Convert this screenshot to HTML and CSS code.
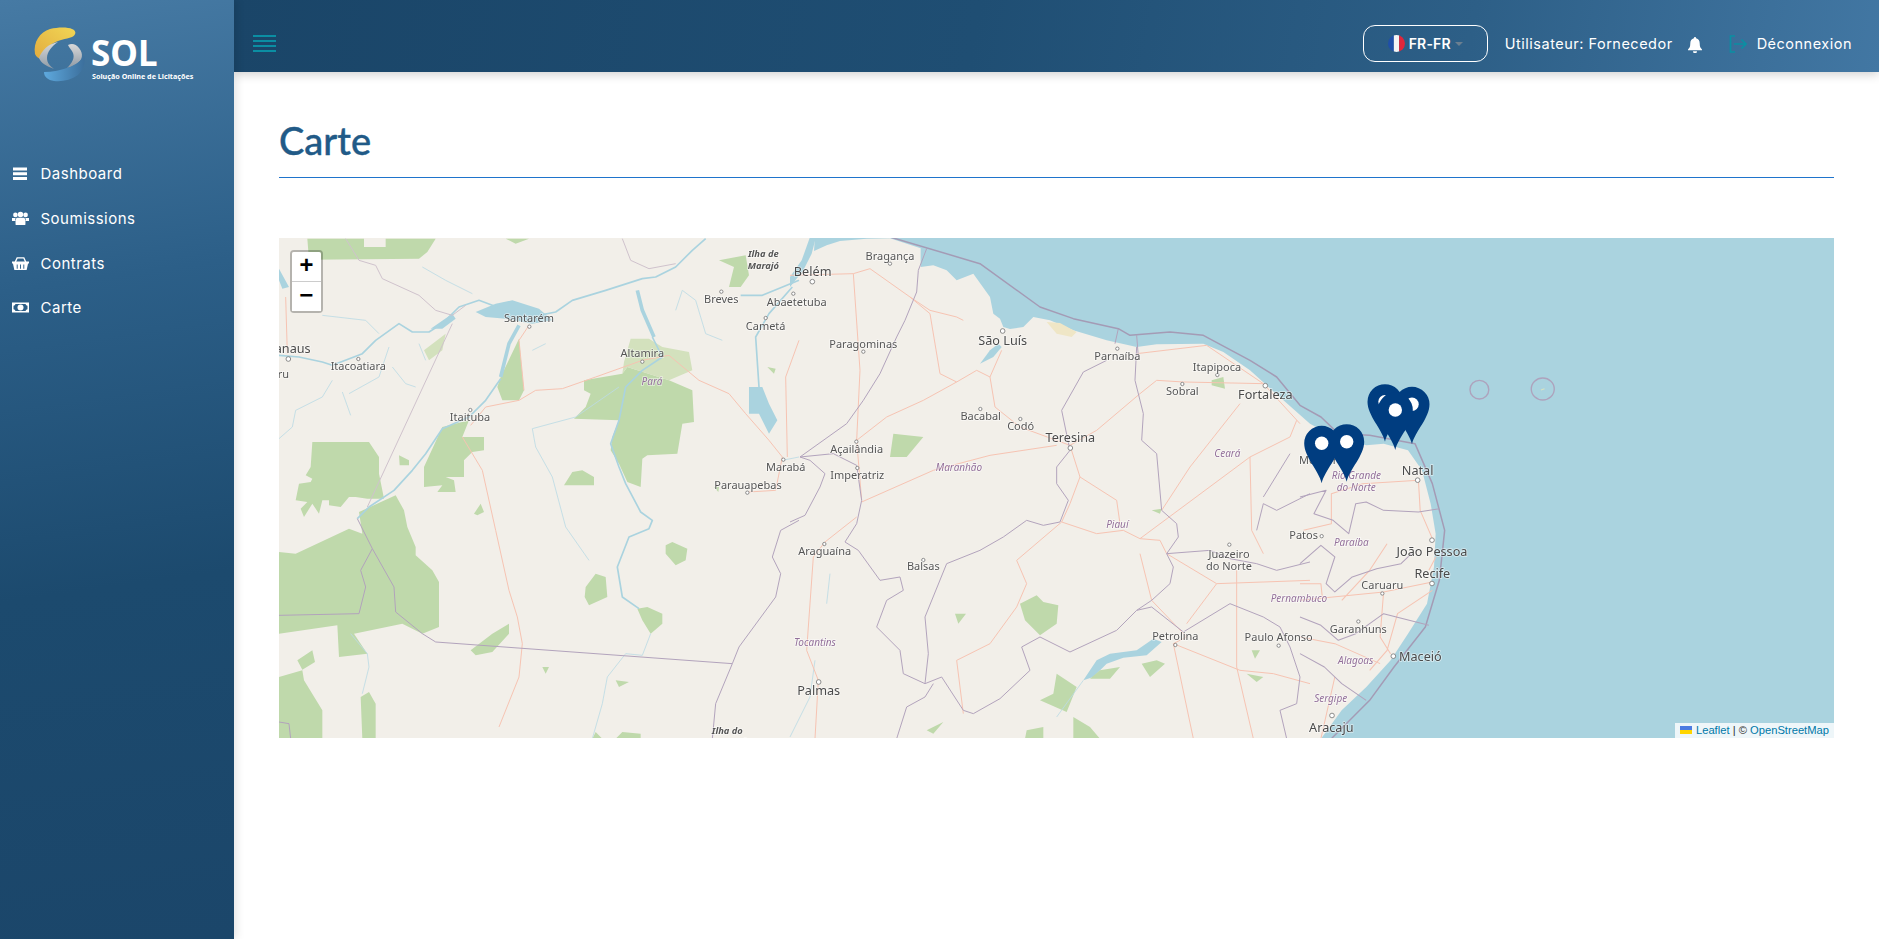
FILE: index.html
```html
<!DOCTYPE html>
<html lang="fr">
<head>
<meta charset="utf-8">
<title>Carte</title>
<link rel="stylesheet" href="styles.css">
</head>
<body>
<div class="app">
  <aside class="sidebar">
    <div class="logo">
      <svg class="logo-svg" width="234" height="100" viewBox="0 0 234 100">
        <defs>
          <linearGradient id="lgY" x1="0" y1="1" x2="1" y2="0"><stop offset="0" stop-color="#e2ab3e"/><stop offset="1" stop-color="#f1d655"/></linearGradient>
          <linearGradient id="lgG" x1="0" y1="0" x2="0" y2="1"><stop offset="0" stop-color="#d9d9d9"/><stop offset="1" stop-color="#8f9aa5"/></linearGradient>
          <linearGradient id="lgB" x1="0" y1="0" x2="1" y2="0"><stop offset="0" stop-color="#5ea9de"/><stop offset="1" stop-color="#3c6f9c"/></linearGradient>
        </defs>
        <path fill="url(#lgY)" d="M35 54C33 42 40 32 50 29C58 27 68 27 72 29C77 31 76 35 72 37C66 39 58 40 52 44C47 48 44 54 44 60C39 59 36 57 35 54Z"/>
        <path fill="url(#lgG)" d="M39 58C42 50 48 44 58 42C52 46 47 52 47 58C47 63 50 66 54 69C46 66 41 63 39 58Z"/>
        <path fill="url(#lgG)" d="M68 45C72 43 76 44 79 48C84 54 82 60 78 63C74 66 71 67 67 68C72 63 75 58 73 53C72 50 69 48 68 45Z"/>
        <path fill="url(#lgB)" d="M44 72C52 72 62 70 70 67C77 64 82 60 84 55C86 63 83 70 78 75C71 80 62 82 54 81C48 80 44 77 44 72Z"/>
        <text class="logo-name" x="91" y="66">SOL</text>
        <text class="logo-sub" x="92" y="79">Solução Online de Licitações</text>
      </svg>
    </div>
    <nav class="nav">
      <a class="nav-item">
        <svg class="nav-icon" viewBox="0 0 17 14"><path d="M1 1h14v3H1zM1 5.700h14v3H1zM1 10.400h14v3H1z"/></svg>
        <span>Dashboard</span>
      </a>
      <a class="nav-item">
        <svg class="nav-icon" viewBox="0 0 17 14"><circle cx="3.400" cy="3.400" r="2.300"/><circle cx="13.600" cy="3.400" r="2.300"/><circle cx="8.500" cy="3" r="2.800"/><path d="M0 6.400h3.600a4 4 0 0 0-.2 3H0zM17 6.400h-3.600a4 4 0 0 1 .2 3H17zM4.600 6.300h7.800c1.200 1.500 1.300 4.700.9 7.200H3.700c-.4-2.500-.3-5.700.9-7.200z"/></svg>
        <span>Soumissions</span>
      </a>
      <a class="nav-item">
        <svg class="nav-icon" viewBox="0 0 18 15"><path class="nav-line" d="M3.500 6 5.500 1.500H12.500L14.500 6"/><path fill-rule="evenodd" d="M0 5.500h18v2h-1L15.500 14.500H2.500L1 7.500H0zM5 8.500h1v4.500H5zM8.500 8.500h1v4.500h-1zM12 8.500h1v4.500h-1z"/></svg>
        <span>Contrats</span>
      </a>
      <a class="nav-item">
        <svg class="nav-icon" viewBox="0 0 17 12"><path fill-rule="evenodd" d="M0 1h17v10H0zM3.500 2.500Q3 4 1.500 4.200V7.800Q3 8 3.500 9.500H13.500Q14 8 15.500 7.800V4.200Q14 4 13.500 2.500z"/><circle cx="8.500" cy="6" r="3"/></svg>
        <span>Carte</span>
      </a>
    </nav>
  </aside>
  <div class="main">
    <header class="topbar">
      <svg class="burger" width="23" height="18" viewBox="0 0 23 18"><path d="M0 1h23M0 6h23M0 11h23M0 16h23"/></svg>
      <div class="top-right">
        <button class="lang">
          <svg class="flag" width="17" height="17" viewBox="0 0 16 16"><defs><clipPath id="fc"><circle cx="8" cy="8" r="8"/></clipPath></defs><g clip-path="url(#fc)"><rect width="5.500" height="16" fill="#1f4fa8"/><rect x="5.500" width="5" height="16" fill="#f4f4f4"/><rect x="10.500" width="5.500" height="16" fill="#e0263b"/></g></svg>
          <span class="lang-text">FR-FR</span>
          <span class="caret"></span>
        </button>
        <span class="user">Utilisateur: Fornecedor</span>
        <svg class="bell" width="14" height="16" viewBox="0 0 14 16"><path d="M7 0a1.200 1.200 0 0 0-1.100 1.300C3.500 1.800 2.300 3.800 2.300 6.200c0 3.600-.8 4.700-2.300 6.200v.9h14v-.9c-1.500-1.500-2.300-2.600-2.300-6.200 0-2.400-1.200-4.400-3.600-4.900A1.200 1.200 0 0 0 7 0zM5 14.200a2 2 0 0 0 4 0z"/></svg>
        <svg class="logout" width="18" height="18" viewBox="0 0 18 18"><path d="M6 1H1.500v16H6M5 9h12M12.500 4.500 17 9l-4.500 4.500"/></svg>
        <span class="logout-text">Déconnexion</span>
      </div>
    </header>
    <main class="content">
      <h1 class="title">Carte</h1>
      <section class="map">
        <svg class="map-svg" width="1555" height="500" viewBox="0 0 1555 500">
          <g class="tiles">
            <g transform="translate(511 -1) scale(.33333)">
              <path class="sea" d="M75 0L72 42L110 25L150 12L230 5L300 4L392 34L392 90L430 85L470 100L500 130L550 110L600 180L610 230L630 245L640 270L660 276L700 270L730 240L780 250L850 280L950 310L1040 330L1100 322L1240 320L1300 345L1380 400L1430 445L1560 560L1634 600L1729 625L1781 620L1854 640L1896 700L1922 800L1937 890L1932 990L1911 1100L1854 1190L1802 1270L1729 1350L1655 1420L1593 1505L4680 1505L4680 0Z"/>
              <path class="sea" d="M60 0L78 0L65 50L40 100L0 150L0 120L35 70Z"/>
              <path class="sand" d="M770 255L810 258L860 285L845 300L800 290Z"/>
              <path class="sea" d="M880 1330L920 1270L960 1250L1040 1240L1090 1205L1115 1215L1070 1255L1000 1262L950 1280L910 1320Z"/>
              <path class="sea" d="M570 380L600 340L625 320L635 330L610 360Z"/>
              <path class="forest" d="M310 590L400 600L350 660L300 660ZM690 1100L740 1075L760 1095L805 1105L800 1160L750 1195L705 1150ZM495 1130L528 1130L505 1160ZM800 1310L860 1350L840 1400L830 1425L750 1390L790 1370ZM1055 1280L1100 1270L1125 1280L1080 1320ZM930 1300L990 1290L960 1325L900 1325ZM1370 1310L1420 1320L1400 1335ZM850 1440L900 1470L930 1505L850 1505ZM410 1480L460 1455L430 1490ZM710 1480L760 1470L760 1505L705 1505ZM1385 1240L1410 1240L1395 1265ZM1085 820L1115 815L1110 830ZM1265 430L1300 420L1305 455L1265 445Z"/>
              <path class="river thin" d="M0 1500L60 1380L75 1270M800 1440L880 1330M120 1010L110 1100"/>
              <path class="road" d="M0 115L190 110L240 95L360 180L420 220L500 240L520 250M190 110L210 400L200 610L215 790M360 180L420 230L450 410L500 435L560 400L600 420L635 340M500 435L400 490L290 540L200 610M600 420L615 510L690 570L840 625L920 580L1050 470L1100 430L1180 435L1420 440M840 625L870 720L840 800L815 855L680 970L710 1040L680 1110L600 1220L500 1270L520 1430M215 795L430 700L600 655L800 625M870 720L980 790L990 860M815 855L920 890L1000 880L1050 905L1110 910L1130 950L1280 1040L1560 1030M1050 905L1380 660L1500 600L1520 550M1350 500L1200 690L1115 820M1050 950L1085 1090L1190 1200L1150 1220L1350 1300L1450 1310L1560 1340M1280 1040L1190 1160M1340 1000L1340 1290L1390 1505M1150 1220L1210 1505M105 915L70 960L50 1240L85 1330L75 1505M105 915L200 840M1380 660L1385 880L1420 950M1420 440L1530 560M1040 350L1250 325L1420 440"/>
              <path class="border" d="M410 35L385 100L380 165L345 250L320 300L270 410L220 490L170 560L30 660L130 650L200 685L215 790L200 860L165 915L205 940L270 1030L330 1020L340 1060L290 1090L260 1170L330 1240L340 1310L405 1340L455 1320L520 1420L550 1430L630 1385L720 1300L695 1230L750 1200L840 1245L980 1180L1040 1120L1085 1090L1140 1040L1150 990L1130 950L1165 900L1160 860L1115 820L1100 650L1055 610L1060 530L1035 430L1040 330M0 855L45 835L90 750L105 710L60 670L30 660M320 1505L350 1410L405 1380L430 1340M405 1340L415 1250L405 1140L470 980L570 940L640 900L710 850L760 865L810 855L835 790L800 740L800 690L840 640L815 520L880 405L950 370M985 275L975 320M1040 295L1045 360M1130 950L1260 940L1320 965L1400 980L1460 1000L1560 975M1040 1120L1085 1110L1180 1185L1320 1100L1420 1140L1470 1170L1500 1230L1530 1320L1520 1400L1470 1420L1490 1505M1400 880L1420 800L1460 820L1560 770M1420 780L1500 650"/>
              <path class="maritime" d="M300 0L570 80L750 210L850 245L985 275L1020 295L1140 285L1240 295L1380 370L1460 420L1530 505L1593 540L1645 590L1739 595L1875 620L1927 740L1964 880L1948 1030L1906 1170L1812 1290L1739 1390L1624 1505"/>
            </g>
            <g transform="translate(0 -1) scale(.33333)">
              <path class="forest" d="M85 5L255 5L255 30L320 30L320 5L470 5L445 45L420 65L90 68ZM680 5L750 5L710 20ZM100 615L270 615L300 660L300 710L310 760L315 785L265 785L230 780L210 780L185 810L150 805L150 790L130 790L120 830L100 800L75 840L65 815L85 795L50 790L60 740L95 735L100 725L80 715L95 690ZM435 690L490 570L570 550L550 600L615 600L615 640L580 645L555 670L555 720L500 720L525 730L530 765L475 765L490 745L435 750ZM240 825L350 775L375 820L385 870L410 930L410 955L460 1000L480 1035L480 1170L430 1190L370 1160L225 1190L265 1250L180 1260L175 1165L0 1190L0 945L50 950L210 875L250 890ZM360 655L390 670L390 685L362 685ZM665 420L720 305L735 460L720 490L670 490L655 450ZM885 545L920 510L935 470L915 460L915 430L1030 410L1045 390L1170 430L1240 460L1245 555L1210 560L1195 650L1105 655L1090 665L1085 750L1045 735L1020 680L995 640L1000 600L1020 550ZM855 745L880 705L910 700L945 720L945 745ZM1160 925L1180 915L1225 935L1220 970L1190 985L1160 950ZM920 1050L950 1010L980 1020L985 1080L930 1105L917 1080ZM1075 1115L1105 1110L1150 1130L1150 1160L1115 1190L1090 1150ZM575 1240L640 1190L690 1160L690 1190L640 1245L590 1255ZM0 1320L70 1300L75 1330L130 1420L130 1505L0 1505ZM245 1380L270 1365L290 1400L290 1505L250 1505ZM55 1270L100 1240L108 1275L70 1298ZM1320 70L1400 55L1410 115L1385 150L1350 150L1365 90ZM1305 750L1320 750L1318 765ZM585 830L605 800L615 825L595 835ZM940 1505L950 1485L970 1505ZM1010 1505L1030 1485L1085 1490L1085 1505ZM790 1290L810 1290L800 1310ZM1010 1330L1050 1335L1020 1350ZM1465 390L1490 395L1485 410Z"/>
              <path class="scrub" d="M1055 305L1110 305L1150 330L1230 345L1240 400L1170 430L1045 390L1030 410L1035 375ZM435 340L500 290L490 340L450 370Z"/>
              <path class="sea" d="M590 225L650 200L700 190L780 215L820 250L760 260L680 245L620 240ZM1410 450L1450 450L1470 500L1495 550L1470 590L1440 530L1410 530ZM455 275L520 230L530 245L490 275ZM0 95L30 150L10 155L0 130Z"/>
              <path class="river wide" d="M720 265L690 320L665 420M1075 160L1090 220L1125 300"/>
              <path class="river" d="M0 355L60 360L130 375L160 385L250 350L290 310L360 260L400 285L450 285L490 260L540 210L600 190L680 220L780 235L830 225L880 190L980 160L1090 125L1130 120L1190 90L1240 40L1280 5M665 425L620 490L570 540L490 575L440 650L400 700L345 760L270 810L235 845M1120 300L1150 360L1090 400L1040 450L1020 550L995 620L1020 690L1040 740L1085 825L1120 850L1110 875L1050 900L1015 990L1030 1080L1080 1115M1385 175L1450 175L1560 130M1440 450L1430 300L1470 230L1540 150"/>
              <path class="river thin" d="M1020 450L890 540L760 575L770 630L820 720L860 870L930 970M0 605L40 570L50 520L130 480L160 430M130 235L260 250L300 290M340 390L380 440L410 450M190 465L215 535M1190 220L1210 160L1250 190L1280 290L1330 310M1115 1190L1090 1255L1040 1250L985 1320L970 1400L940 1505M215 1190L265 1250L270 1290L250 1370M760 340L800 320M1510 670L1560 660M430 90L500 130L580 170M330 330L300 420L210 470M420 320L440 370"/>
              <path class="road" d="M550 600L610 700L650 880L690 1060L715 1140L730 1220L720 1320L660 1470M575 565L620 510L720 490L770 460L850 455L950 420L1090 370L1170 355L1260 430L1350 470L1400 530L1470 610L1510 660L1490 760L1410 765M750 265L720 310L735 460M1560 310L1520 420L1525 660M20 180L25 350"/>
              <path class="border light" d="M520 260L265 810"/>
              <path class="border light" d="M200 5L240 70L290 85L310 125L420 175L470 220L520 235L560 205M1030 5L1055 70L1110 95L1190 80"/>
              <path class="border" d="M235 845L280 935L345 1050L350 1125L430 1190L470 1215L1360 1280M280 935L245 1000L260 1050L240 1130L0 1135M1560 850L1505 880L1480 960L1505 1010L1490 1080L1380 1230L1360 1280L1310 1400L1300 1505M0 1455L30 1460L35 1505"/>
            </g>
            <g transform="translate(1021 -1) scale(.3483 .33333)">
              <path class="road" d="M0 1090L240 1065L380 1035M340 730L180 740L90 770L90 860L10 880M340 730L345 820L380 905M240 1065L230 1200L260 1250M380 1060L280 1130L250 1240L200 1300M0 1200L100 1220L230 1280M100 1320L60 1505M0 1040L60 1040L65 1090M250 920L200 1000L120 1090M370 1000L390 960"/>
              <path class="border" d="M0 980L60 925L100 960L75 1040L100 1065L150 1020L220 995L290 980L320 950M0 780L75 760L40 830L95 850L140 890L160 800L190 795L240 820L340 825L400 815M0 1140L60 1165L110 1210L160 1190L240 1130L370 1165M0 1250L70 1290L120 1340L190 1390"/>
              <ellipse class="islet" cx="515" cy="458" rx="27" ry="28"/>
              <ellipse class="islet" cx="697" cy="456" rx="33" ry="33"/>
              <path class="tiny-land" d="M692 459L702 455"/>
            </g>
            <g class="cities" transform="translate(0 1) scale(.33333)">
              <circle class="dot big" cx="28" cy="360" r="7"/><circle class="dot" cx="238" cy="360" r="5"/><circle class="dot" cx="751" cy="263" r="5"/><circle class="dot" cx="574" cy="513" r="5"/><circle class="dot" cx="1090" cy="368" r="5"/><circle class="dot" cx="1327" cy="158" r="5"/><circle class="dot" cx="1543" cy="164" r="5"/><circle class="dot" cx="1460" cy="237" r="5"/><circle class="dot" cx="1513" cy="662" r="5"/><circle class="dot" cx="1405" cy="761" r="5"/>
              <text class="city end" x="95" y="343">Manaus</text>
              <text class="city small end" x="30" y="416">Manacapuru</text>
              <text class="city small mid" x="238" y="393">Itacoatiara</text>
              <text class="city small mid" x="750" y="250">Santarém</text>
              <text class="city small mid" x="573" y="547">Itaituba</text>
              <text class="city small mid" x="1090" y="355">Altamira</text>
              <text class="city small mid" x="1327" y="192">Breves</text>
              <text class="city small" x="1463" y="200">Abaetetuba</text>
              <text class="city small mid" x="1460" y="272">Cametá</text>
              <text class="city small" x="1461" y="696">Marabá</text>
              <text class="city small mid" x="1407" y="749">Parauapebas</text>
              <text class="state mid" x="1119" y="439">Pará</text>
              <text class="island mid" x="1453" y="54">Ilha de</text>
              <text class="island mid" x="1453" y="90">Marajó</text>
              <text class="island mid" x="1345" y="1484">Ilha do</text>
              <text class="island mid" x="1345" y="1518">Bananal</text>
            </g>
            <g class="cities" transform="translate(511 1) scale(.33333)">
              <circle class="dot big" cx="67" cy="128" r="7"/><circle class="dot" cx="300" cy="74" r="5"/><circle class="dot big" cx="638" cy="276" r="7"/><circle class="dot" cx="220" cy="338" r="5"/><circle class="dot" cx="982" cy="329" r="5"/><circle class="dot" cx="1282" cy="408" r="5"/><circle class="dot" cx="1177" cy="435" r="5"/><circle class="dot big" cx="1426" cy="440" r="7"/><circle class="dot" cx="571" cy="510" r="5"/><circle class="dot" cx="691" cy="540" r="5"/><circle class="dot big" cx="841" cy="627" r="7"/><circle class="dot" cx="199" cy="608" r="5"/><circle class="dot" cx="202" cy="687" r="5"/><circle class="dot" cx="103" cy="915" r="5"/><circle class="dot" cx="400" cy="963" r="5"/><circle class="dot" cx="1318" cy="917" r="5"/><circle class="dot" cx="1156" cy="1218" r="5"/><circle class="dot" cx="1466" cy="1220" r="5"/><circle class="dot big" cx="86" cy="1329" r="7"/>
              <text class="city mid" x="68" y="112">Belém</text>
              <text class="city small mid" x="300" y="62">Bragança</text>
              <text class="city mid" x="638" y="318">São Luís</text>
              <text class="city small mid" x="220" y="327">Paragominas</text>
              <text class="city small mid" x="982" y="362">Parnaíba</text>
              <text class="city small mid" x="1281" y="396">Itapipoca</text>
              <text class="city small mid" x="1177" y="468">Sobral</text>
              <text class="city mid" x="1426" y="479">Fortaleza</text>
              <text class="city small mid" x="572" y="543">Bacabal</text>
              <text class="city small mid" x="692" y="574">Codó</text>
              <text class="city mid" x="841" y="610">Teresina</text>
              <text class="city small mid" x="200" y="641">Açailândia</text>
              <text class="city small mid" x="202" y="721">Imperatriz</text>
              <text class="state mid" x="507" y="697">Maranhão</text>
              <text class="city small mid" x="104" y="949">Araguaína</text>
              <text class="city small mid" x="400" y="994">Balsas</text>
              <text class="state mid" x="1312" y="655">Ceará</text>
              <text class="state mid" x="982" y="866">Piauí</text>
              <text class="city small mid" x="1317" y="957">Juazeiro</text>
              <text class="city small mid" x="1317" y="992">do Norte</text>
              <text class="city small mid" x="1156" y="1204">Petrolina</text>
              <text class="city small mid" x="1466" y="1207">Paulo Afonso</text>
              <text class="state" x="1442" y="1089">Pernambuco</text>
              <text class="state mid" x="75" y="1221">Tocantins</text>
              <text class="city mid" x="86" y="1367">Palmas</text>
              <text class="city small" x="1527" y="674">Mossoró</text>
            </g>
            <g class="cities" transform="translate(1021 .5) scale(.33333)">
              <circle class="dot big" cx="353" cy="725" r="7"/><circle class="dot" cx="65" cy="893" r="5"/><circle class="dot big" cx="396" cy="905" r="7"/><circle class="dot big" cx="396" cy="1035" r="7"/><circle class="dot" cx="247" cy="1065" r="5"/><circle class="dot" cx="175" cy="1149" r="5"/><circle class="dot big" cx="280" cy="1253" r="7"/><circle class="dot big" cx="96" cy="1431" r="7"/>
              <text class="city mid" x="353" y="709">Natal</text>
              <text class="city small end" x="54" y="902">Patos</text>
              <text class="city mid" x="396" y="953">João Pessoa</text>
              <text class="city mid" x="397" y="1019">Recife</text>
              <text class="city small mid" x="247" y="1053">Caruaru</text>
              <text class="city small mid" x="175" y="1184">Garanhuns</text>
              <text class="city" x="297" y="1268">Maceió</text>
              <text class="city mid" x="94" y="1480">Aracaju</text>
              <text class="state mid" x="154" y="922">Paraíba</text>
              <text class="state mid" x="169" y="723">Rio Grande</text>
              <text class="state mid" x="169" y="759">do Norte</text>
              <text class="state mid" x="167" y="1278">Alagoas</text>
              <text class="state mid" x="92" y="1390">Sergipe</text>
            </g>
          </g>
          <defs>
            <g id="pin"><path class="pin-body" d="M0 0C-3-13-17.500-26-17.500-40A17.500 17.500 0 0 1 17.500-40C17.500-26 3-13 0 0Z"/><circle class="pin-hole" cx="0" cy="-40" r="6.700"/></g>
          </defs>
          <g class="pins">
            <use href="#pin" x="1042.700" y="245.300"/>
            <use href="#pin" x="1067.700" y="243.700"/>
            <use href="#pin" x="1106" y="203.700"/>
            <use href="#pin" x="1133" y="206.300"/>
            <use href="#pin" x="1116.300" y="212"/>
          </g>
        </svg>
        <div class="zoom">
          <a class="zoom-btn zoom-in">+</a>
          <a class="zoom-btn">−</a>
        </div>
        <div class="attribution">
          <svg class="ua" width="12" height="8" viewBox="0 0 12 8"><rect width="12" height="4" fill="#4c7be1"/><rect y="4" width="12" height="4" fill="#ffd500"/></svg>
          <a class="attr-link">Leaflet</a> <span class="attr-sep">|</span> © <a class="attr-link">OpenStreetMap</a>
        </div>
      </section>
    </main>
  </div>
</div>
</body>
</html>
```
FILE: styles.css
```css
* { box-sizing: border-box; }
html, body { margin: 0; height: 100%; overflow: hidden; background: #fff; }
body { font-family: Inter, "Liberation Sans", sans-serif; }
.app { display: flex; height: 939px; }

.sidebar {
  width: 234px;
  flex: none;
  background: linear-gradient(172deg, #467aa4 0%, #2c5f88 30%, #1c4a6e 62%, #1b466a 100%);
  box-shadow: 3px 0 8px rgba(0, 0, 0, .1);
  position: relative;
  z-index: 2;
  color: #fff;
}
.logo { height: 151.500px; }
.logo-svg { display: block; }
.logo-name { font: 700 35px "Noto Sans", sans-serif; fill: #fff; }
.logo-sub { font: 700 7.200px "Noto Sans", sans-serif; fill: #fff; }
.nav { display: flex; flex-direction: column; }
.nav-item { display: flex; align-items: center; height: 44.700px; padding-left: 12px; gap: 11.500px; font-size: 15px; letter-spacing: .5px; color: #fff; }
.nav-icon { width: 17px; height: 15px; fill: #fff; flex: none; }
.nav-line { fill: none; stroke: #fff; stroke-width: 1.500; }

.main { flex: 1; min-width: 0; display: flex; flex-direction: column; }
.topbar {
  height: 72px;
  flex: none;
  display: flex;
  align-items: center;
  justify-content: space-between;
  padding: 15px 27px 0 19px;
  background: linear-gradient(100deg, #1a4568 0%, #1f4e73 45%, #2d5f87 75%, #4277a3 100%);
  box-shadow: 0 2px 10px rgba(0, 0, 0, .2);
  color: #fff;
  position: relative;
  z-index: 1;
}
.burger { stroke: #0b8ea3; stroke-width: 2; fill: none; }
.top-right { display: flex; align-items: center; font-size: 14.500px; letter-spacing: .5px; }
.lang {
  width: 125px;
  height: 37px;
  display: flex;
  align-items: center;
  justify-content: center;
  gap: 4px;
  border: 1px solid #fff;
  border-radius: 12px;
  background: transparent;
  color: #fff;
  font: 600 14px Inter, sans-serif;
  padding: 0;
  margin-right: 17px;
}
.lang-text { letter-spacing: .2px; }
.caret { width: 0; height: 0; border: 4px solid transparent; border-top: 4px solid #6b7f90; border-bottom: 0; }
.user { white-space: nowrap; }
.bell { fill: #fff; margin: 2px 0 0 15px; flex: none; }
.logout { stroke: #0b8fa3; stroke-width: 1.700; fill: none; margin: 0 10px 0 27px; flex: none; }
.logout-text { white-space: nowrap; }

.content { flex: 1; padding: 46px 45px 0; background: #fff; }
.title {
  margin: 0 0 60px;
  height: 60px;
  border-bottom: 1px solid #1f74cc;
  font: 500 38px/44px Lato, sans-serif;
  -webkit-text-stroke: .4px #215a87;
  color: #215a87;
}
.map { position: relative; height: 500px; overflow: hidden; background: #f2efe9; }
.map-svg { display: block; }
.tiles { filter: blur(.3px); }
.sea { fill: #aad3df; }
.sand { fill: #efe6c6; }
.forest { fill: #bfd9ab; }
.scrub { fill: #d3e1bd; }
.river { fill: none; stroke: #aad3df; stroke-width: 5; stroke-linejoin: round; }
.river.wide { stroke-width: 11; }
.river.thin { stroke-width: 2.500; stroke: #bcdbe5; }
.road { fill: none; stroke: #f6c3b2; stroke-width: 3; stroke-linejoin: round; }
.border { fill: none; stroke: #b2a3bc; stroke-width: 3; stroke-linejoin: round; }
.border.light { stroke: #cfc2cc; stroke-width: 3; }
.maritime { fill: none; stroke: #a49bb5; stroke-width: 4.500; stroke-linejoin: round; }
.islet { fill: none; stroke: #aea3bd; stroke-width: 4; }
.tiny-land { stroke: #d9e3c0; stroke-width: 3; }
.dot { fill: #fff; stroke: #777; stroke-width: 2.500; }
.city, .state, .island {
  font-family: "Noto Sans", sans-serif;
  paint-order: stroke;
  stroke: rgba(255, 255, 255, .55);
  stroke-width: 5;
}
.city { font-size: 38px; fill: #4a4a4a; }
.city.small { font-size: 33px; fill: #555; }
.state { font-size: 30px; font-style: italic; fill: #93709a; }
.island { font-size: 28px; font-style: italic; font-weight: 700; fill: #555; }
.mid { text-anchor: middle; }
.end { text-anchor: end; }
.pin-body { fill: #003d80; }
.pin-hole { fill: #fff; }

.zoom {
  position: absolute;
  left: 11px;
  top: 12px;
  width: 33px;
  border: 2px solid rgba(0, 0, 0, .25);
  border-radius: 4px;
  background-clip: padding-box;
}
.zoom-btn {
  display: block;
  height: 29.500px;
  background: #fff;
  color: #000;
  text-align: center;
  font: 700 24px/29px "Liberation Mono", monospace;
}
.zoom-in { border-bottom: 1px solid #ccc; border-radius: 2px 2px 0 0; }
.attribution {
  position: absolute;
  right: 0;
  bottom: 0;
  height: 15px;
  padding: 0 5px;
  background: rgba(255, 255, 255, .8);
  font: 11.200px/15px "Liberation Sans", sans-serif;
  color: #333;
  white-space: nowrap;
}
.attr-link { color: #0078a8; }
.ua { vertical-align: baseline; margin-right: 1px; }
```
